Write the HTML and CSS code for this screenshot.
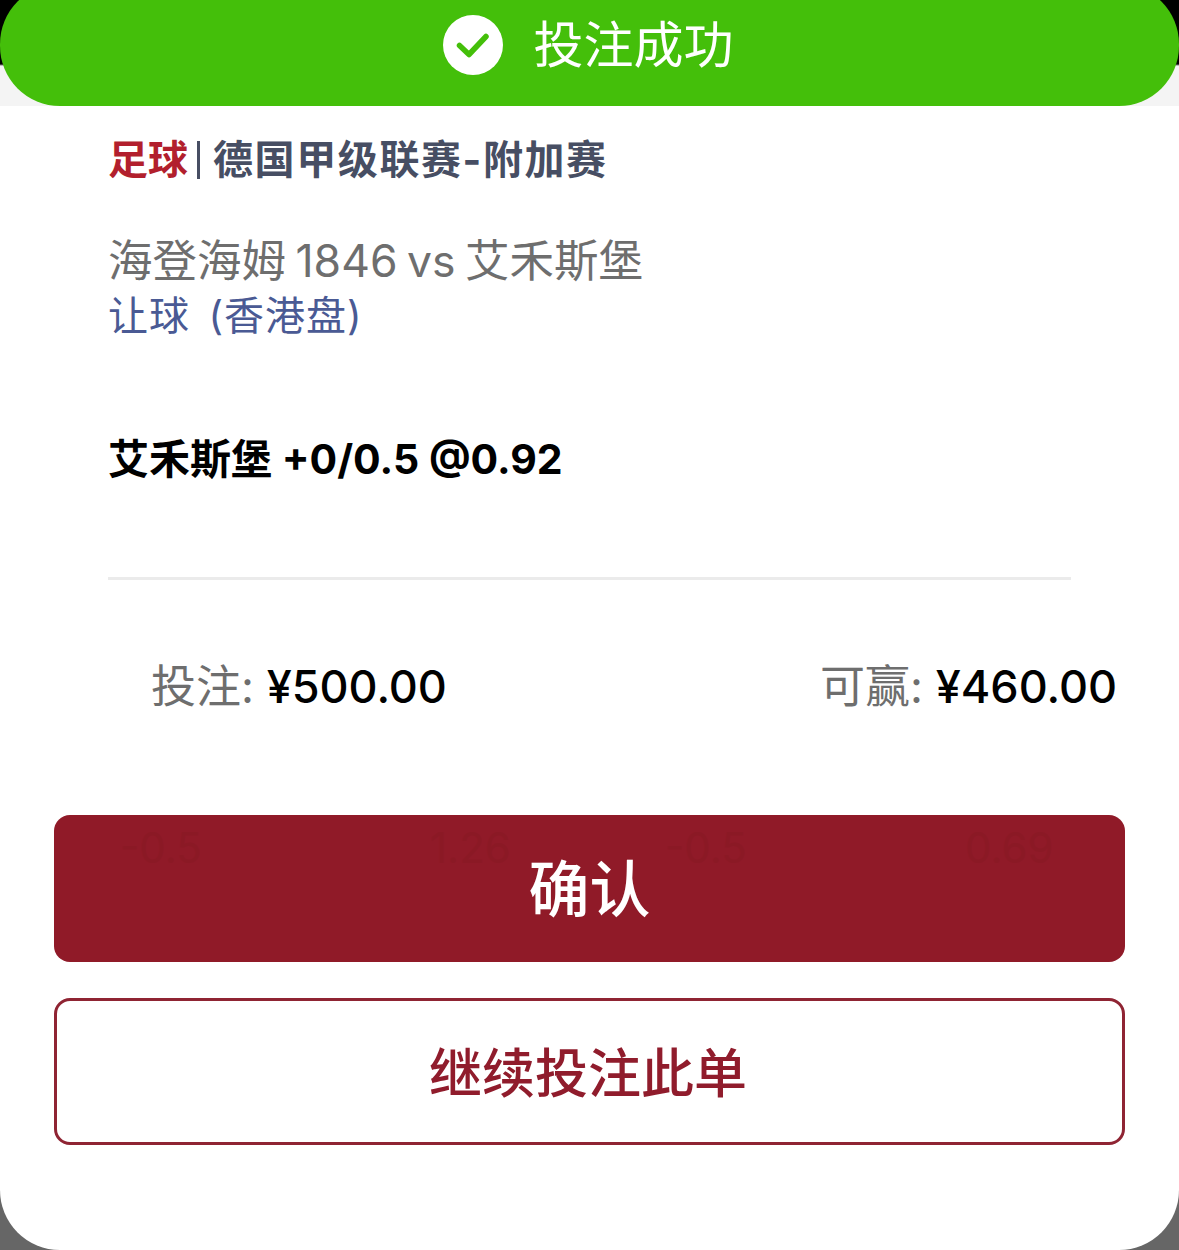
FILE: index.html
```html
<!DOCTYPE html>
<html lang="zh-CN">
<head>
<meta charset="utf-8">
<title>投注成功</title>
<link rel="stylesheet" href="styles.css">
</head>
<body>
<div class="sheet">
  <div class="top">
    <div class="banner">
      <svg class="check" viewBox="0 0 60 60" width="60" height="60" aria-hidden="true">
        <circle cx="30" cy="30" r="30" fill="#fff"/>
        <path d="M16.5 30.5 L26 39.5 L43 21.5" fill="none" stroke="#44bf0a" stroke-width="5.5" stroke-linecap="round" stroke-linejoin="round"/>
      </svg>
      <span class="banner-text">投注成功</span>
    </div>
  </div>
  <div class="content">
    <div class="league"><span class="sport">足球</span><span class="bar"></span><span class="league-name">德国甲级联赛-附加赛</span></div>
    <div class="teams">海登海姆 1846 vs 艾禾斯堡</div>
    <div class="market">让球&nbsp;&nbsp;(香港盘)</div>
    <div class="pick">艾禾斯堡 +0/0.5 @0.92</div>
    <div class="divider"></div>
  </div>
  <div class="amounts">
    <div class="amount"><span class="label">投注:</span> <span class="value">¥500.00</span></div>
    <div class="amount"><span class="label">可赢:</span> <span class="value">¥460.00</span></div>
  </div>
  <div class="actions">
    <button class="btn btn-primary" type="button">
      <span class="ghost"><span>-0.5</span><span>1.26</span><span>-0.5</span><span>0.69</span></span>
      确认
    </button>
    <button class="btn btn-outline" type="button">继续投注此单</button>
  </div>
</div>
</body>
</html>
```
FILE: styles.css
```css
* { box-sizing: border-box; }
html, body { margin: 0; padding: 0; }
body {
  width: 1179px;
  height: 1250px;
  overflow: hidden;
  background: #666;
  font-family: "Inter", "Noto Sans CJK SC", sans-serif;
}
.sheet {
  width: 1179px;
  height: 1250px;
  background: #fff;
  border-radius: 0 0 60px 60px;
  overflow: hidden;
}
.top {
  display: flow-root;
  height: 106px;
  background: linear-gradient(#000 0, #000 64px, #f4f4f4 66px);
}
.banner {
  height: 122px;
  margin-top: -16px;
  background: #44bf0a;
  border-radius: 60px;
  display: flex;
  align-items: center;
  justify-content: center;
  gap: 31px;
  padding-right: 3px;
}
.check { flex: none; }
.banner-text {
  color: #fff;
  font-size: 50px;
  line-height: 60px;
}
.content { padding: 0 108px; }
.league {
  display: flex;
  align-items: center;
  height: 42px;
  margin-top: 33px;
  font-size: 40px;
  line-height: 42px;
  font-weight: 700;
}
.sport { color: #b21f2d; }
.bar { width: 3px; height: 38px; margin: 0 13px 0 9px; background: #474e63; }
.league-name { color: #474e63; letter-spacing: 1.6px; }
.teams {
  margin-top: 52px;
  font-size: 44.5px;
  line-height: 56px;
  word-spacing: -3px;
  color: #6e6e6e;
}
.market {
  font-size: 40px;
  line-height: 56px;
  letter-spacing: 1px;
  word-spacing: -3px;
  color: #4a5a94;
  margin-top: -1px;
}
.pick {
  margin-top: 87px;
  font-size: 41px;
  line-height: 56px;
  font-weight: 700;
  color: #000;
}
.divider {
  margin-top: 90px;
  width: 963px;
  height: 3px;
  background: #ebebeb;
}
.amounts {
  display: flex;
  justify-content: space-between;
  padding: 0 62px 0 151px;
  margin-top: 77px;
}
.amount { font-size: 45px; line-height: 60px; }
.label { color: #6e6e6e; }
.value { color: #000; font-weight: 500; }
.actions {
  display: flex;
  flex-direction: column;
  gap: 36px;
  padding: 0 54px;
  margin-top: 98px;
}
.btn {
  display: block;
  position: relative;
  width: 100%;
  height: 147px;
  border-radius: 16px;
  font-family: inherit;
  padding: 0;
}
.btn-primary {
  border: 0;
  background: #901a28;
  color: #fff;
  font-size: 61px;
  font-weight: 500;
  padding-bottom: 7px;
}
.ghost {
  position: absolute;
  top: 8px;
  left: 66px;
  display: grid;
  grid-template-columns: 310px 235px 300px 100px;
  font-size: 42px;
  line-height: 50px;
  font-weight: 400;
  text-align: left;
  color: #8b1925;
}
.btn-outline {
  border: 3px solid #8f2433;
  background: #fff;
  color: #901c2c;
  font-size: 53px;
  font-weight: 500;
  padding: 0 3px 4px 0;
}
```
